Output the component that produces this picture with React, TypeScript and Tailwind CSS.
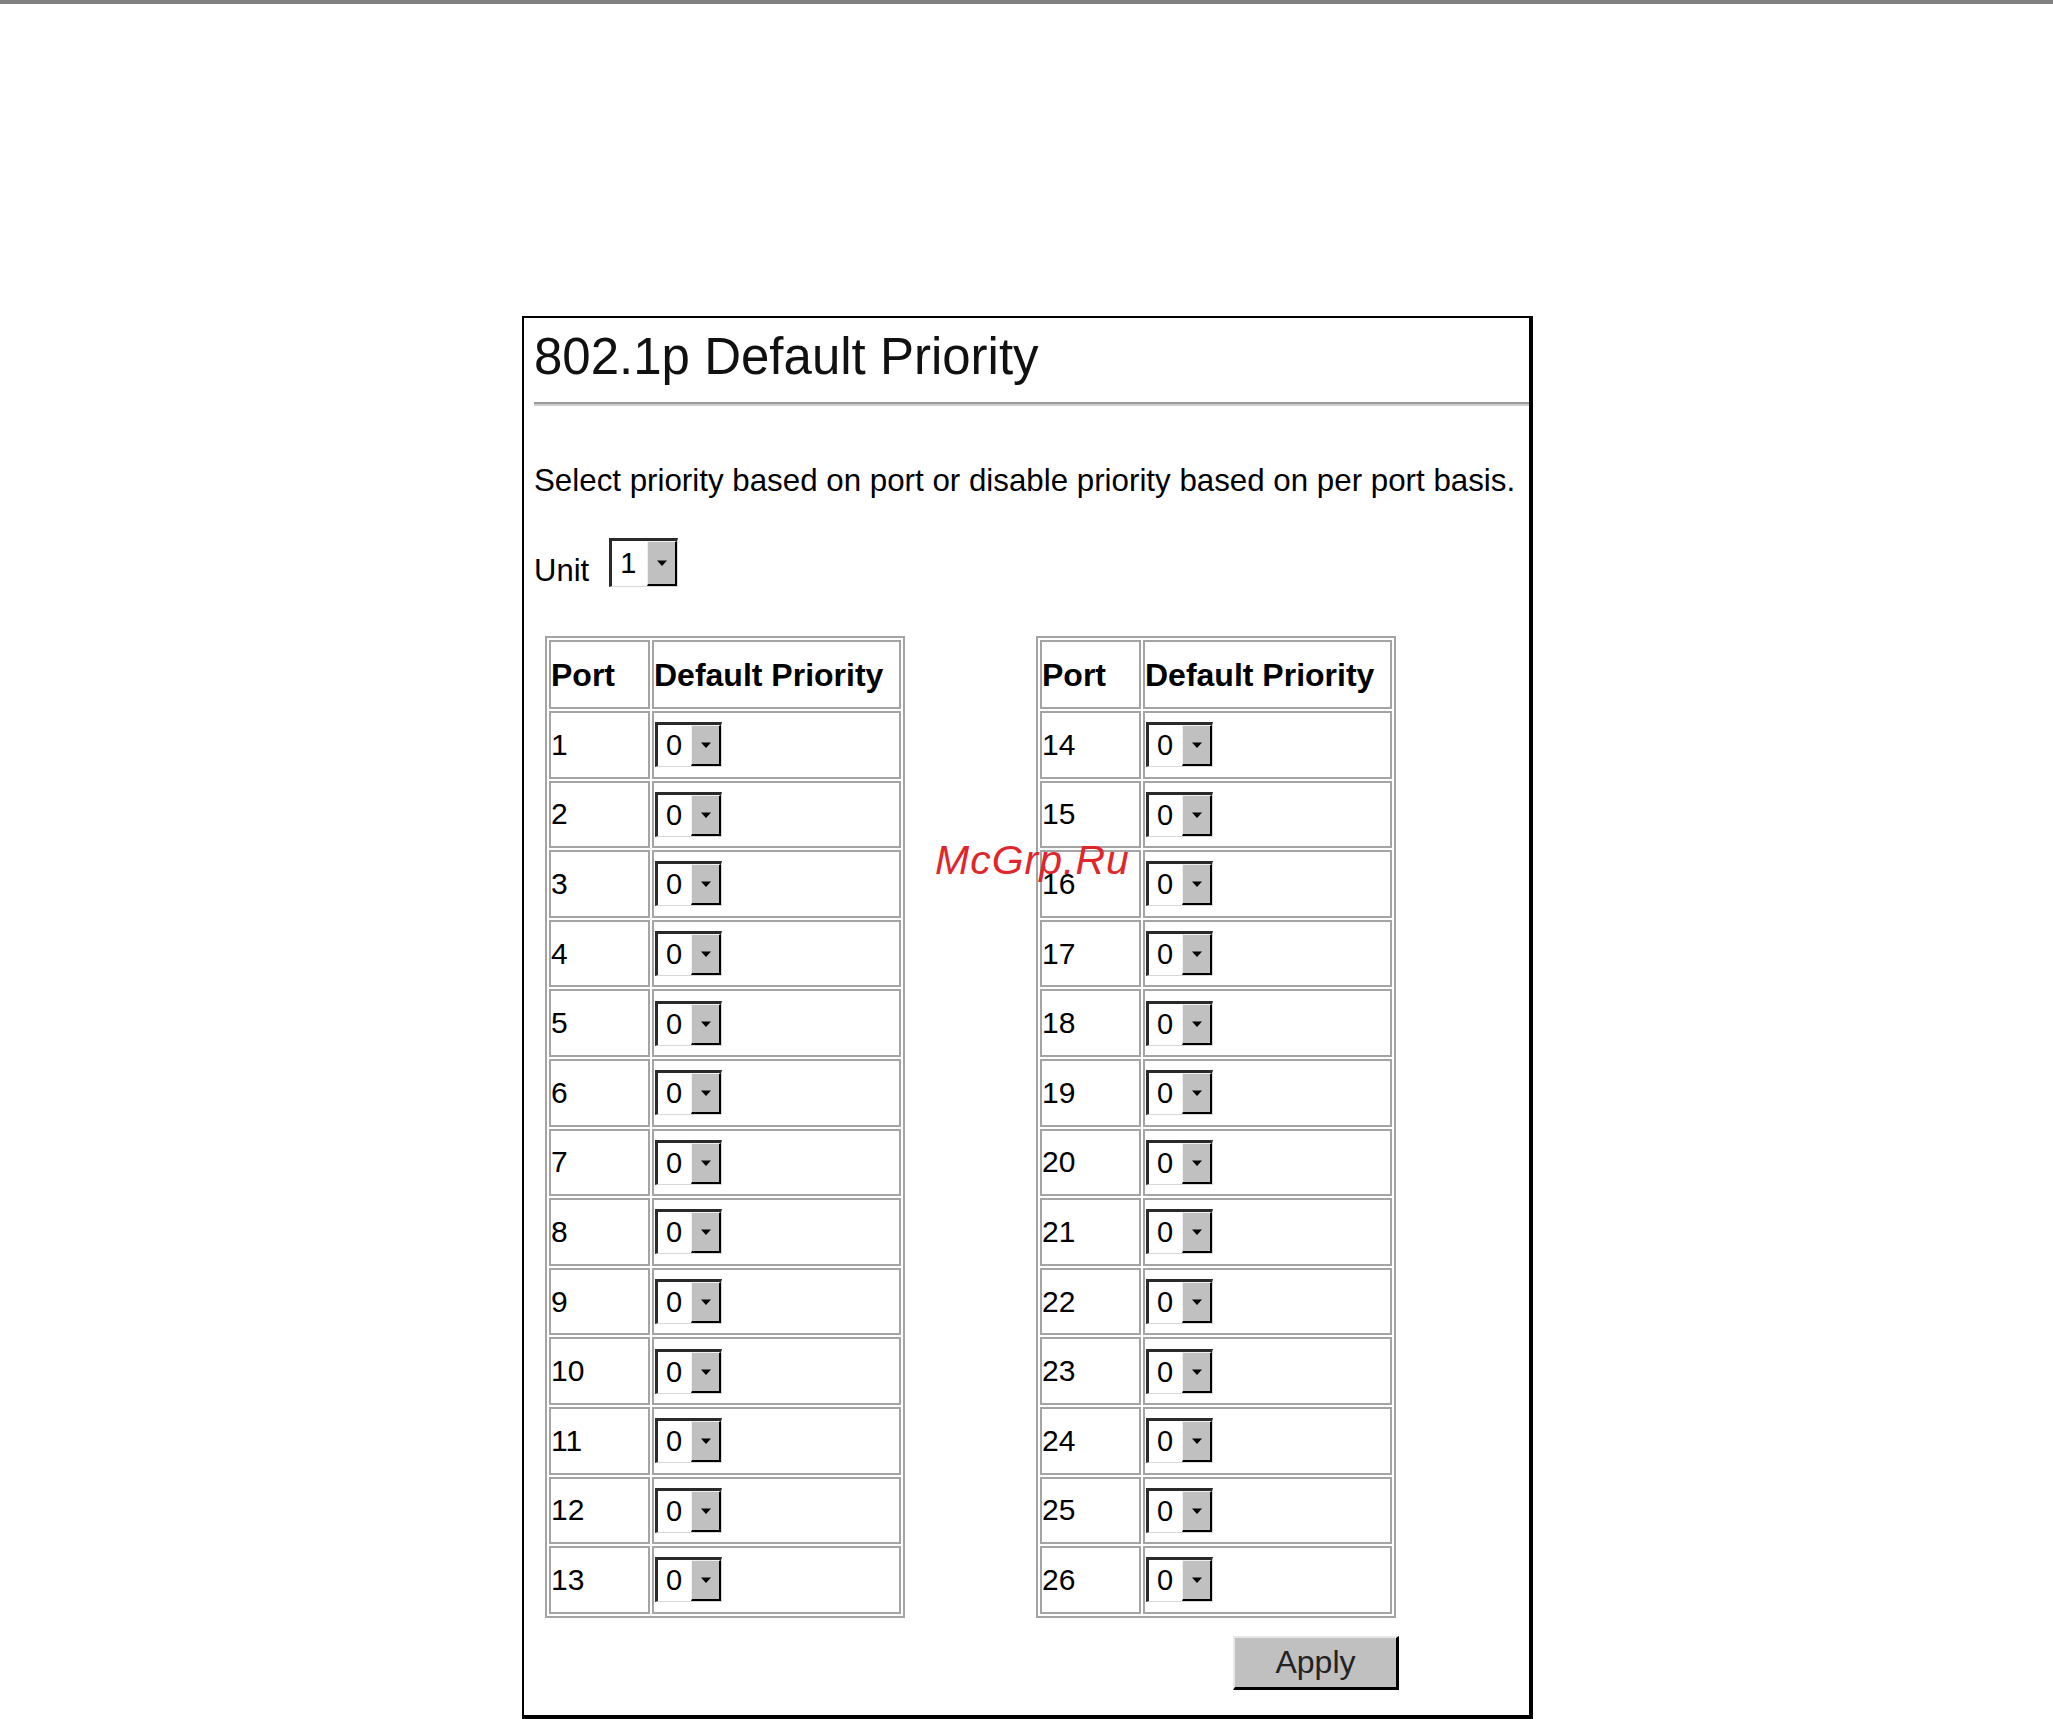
import React from "react";

function Drop({ value, big }: { value: string; big?: boolean }) {
  return (
    <div
      className={
        "flex bg-white border-t-[3px] border-l-[3px] border-r border-b border-[#2a2a2a] border-r-[#d8d8d8] border-b-[#d8d8d8] " +
        (big ? "w-[69px] h-[49px]" : "w-[67px] h-[45px]")
      }
    >
      <div className="flex flex-1 items-center pl-[8px] text-[29px] leading-none text-black">{value}</div>
      <div className="flex w-[30px] items-center justify-center bg-[#c0c0c0] border-t border-l border-[#f0f0f0] border-r-2 border-b-2 border-r-black border-b-black">
        <svg width="12" height="8" viewBox="0 0 12 8">
          <path d="M1 1.5h10L6 7z" fill="#000" />
        </svg>
      </div>
    </div>
  );
}

function PortTable({ from }: { from: number }) {
  const ports = Array.from({ length: 13 }, (_, i) => from + i);
  return (
    <table className="w-[360px] table-fixed border-separate border-spacing-[2px] border-2 border-[#a4a4a4]">
      <thead>
        <tr>
          <th className="h-[69px] w-[101px] p-0 text-left align-middle text-[32px] font-bold border-2 border-[#a4a4a4]">
            Port
          </th>
          <th className="h-[69px] w-[249px] p-0 text-left align-middle text-[32px] font-bold border-2 border-[#a4a4a4]">
            Default Priority
          </th>
        </tr>
      </thead>
      <tbody>
        {ports.map((p) => (
          <tr key={p}>
            <td className="h-[67.6px] p-0 align-middle text-[30px] leading-none border-2 border-[#a4a4a4]">{p}</td>
            <td className="h-[67.6px] p-0 pl-px align-middle border-2 border-[#a4a4a4]">
              <Drop value="0" />
            </td>
          </tr>
        ))}
      </tbody>
    </table>
  );
}

export default function App() {
  return (
    <div className="relative min-h-[1719px] w-[2053px] bg-white font-['Liberation_Sans',Arial,sans-serif] text-black">
      <div className="h-[4px] w-full bg-[#808080]" />

      <div className="ml-[522px] mt-[312px] h-[1403px] w-[1011px] border-t-2 border-l-2 border-r-4 border-b-4 border-black pl-[10px]">
        <h1 className="pt-[9px] text-[51px] font-normal leading-[60px] text-[#111]">802.1p Default Priority</h1>
        <div className="mt-[15px]">
          <div className="h-[2px] bg-[#9a9a9a]" />
          <div className="h-[2px] bg-[#cfcfcf]" />
        </div>

        <p className="mt-[57px] text-[31.3px] leading-[36px]">
          Select priority based on port or disable priority based on per port basis.
        </p>

        <div className="mt-[39px] flex items-end gap-[20px]">
          <span className="text-[31px] leading-[32px]">Unit</span>
          <Drop value="1" big />
        </div>

        <div className="ml-[11px] mt-[49px] w-[854px]">
          <div className="flex gap-[131px]">
            <PortTable from={1} />
            <PortTable from={14} />
          </div>
          <div className="mt-[18px] flex justify-end">
            <button className="h-[54px] w-[166px] bg-[#c0c0c0] border-t-2 border-l-2 border-r-[3px] border-b-[3px] border-[#e8e8e8] border-r-black border-b-black text-[32px] leading-none text-[#222]">
              Apply
            </button>
          </div>
        </div>
      </div>

      <div className="absolute left-[935px] top-[840px] z-10 text-[41px] italic leading-[41px] tracking-[1px] text-[#e0262b]">
        McGrp.Ru
      </div>
    </div>
  );
}
